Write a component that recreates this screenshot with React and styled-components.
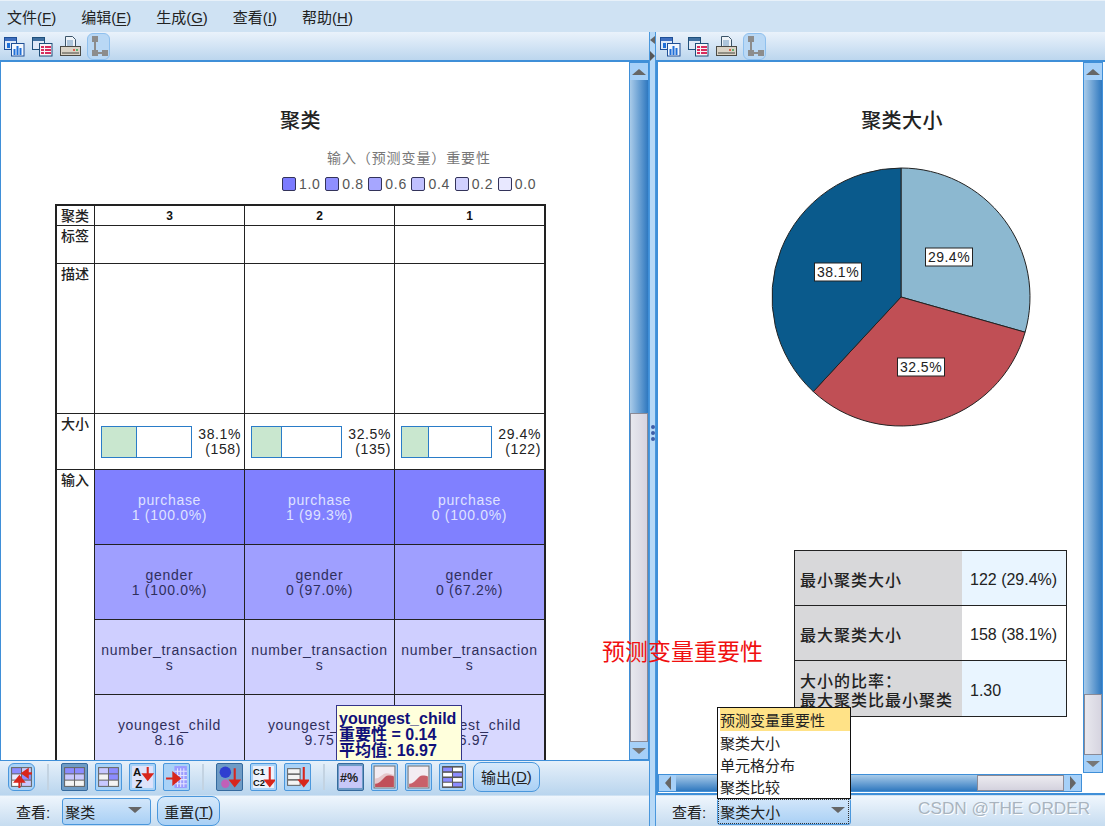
import React from "react";
import styled, { createGlobalStyle } from "styled-components";

const GlobalStyle = createGlobalStyle`
  html, body {
    margin: 0;
    padding: 0;
    background: #fff;
    font-family: "Liberation Sans", "Noto Sans CJK SC", sans-serif;
  }
`;

const clusters = [
  { id: 3, pct: 38.1, count: 158, cells: ["1 (100.0%)", "1 (100.0%)", "", "8.16"] },
  { id: 2, pct: 32.5, count: 135, cells: ["1 (99.3%)", "0 (97.0%)", "", "9.75"] },
  { id: 1, pct: 29.4, count: 122, cells: ["0 (100.0%)", "0 (67.2%)", "", "16.97"] },
];

const inputRows = [
  { name: "purchase", bg: "#8080ff", color: "#dfe2ff" },
  { name: "gender", bg: "#9f9fff", color: "#2f2f5c" },
  { name: "number_transaction\ns", bg: "#cfcfff", color: "#2f2f5c" },
  { name: "youngest_child", bg: "#d8d8ff", color: "#2f2f5c" },
];

const legend = [
  ["1.0", "#7b7bff"],
  ["0.8", "#8f8fff"],
  ["0.6", "#a6a6ff"],
  ["0.4", "#c0c0ff"],
  ["0.2", "#d0d0ff"],
  ["0.0", "#e8e8ff"],
];

const slices = [
  { pct: 29.4, color: "#8cb8d0", lx: 48, ly: -40 },
  { pct: 32.5, color: "#c04f55", lx: 20, ly: 70 },
  { pct: 38.1, color: "#0a5a8c", lx: -63, ly: -25 },
];

const Page = styled.div`
  position: relative;
  width: 1105px;
  height: 826px;
  overflow: hidden;
  display: flex;
  flex-direction: column;
  background: #cfe2f3;
`;

const MenuBar = styled.div`
  height: 32px;
  box-sizing: border-box;
  padding: 0 0 1px 7px;
  display: flex;
  align-items: center;
  gap: 25px;
  background: #cfe2f3;
  border-top: 1px solid #e8f1f9;
  font-size: 15px;
  color: #222;
`;

const MenuItem = styled.span`
  u {
    text-underline-offset: 2px;
  }
`;

const Panes = styled.div`
  flex: 1;
  display: flex;
  min-height: 0;
`;

const LeftPane = styled.div`
  width: 649px;
  display: flex;
  flex-direction: column;
`;

const RightPane = styled.div`
  position: relative;
  flex: 1;
  display: flex;
  flex-direction: column;
`;

const Splitter = styled.div`
  width: 7px;
  box-sizing: border-box;
  background: #b7d9f7;
  border-left: 1px solid #4a97dc;
  border-right: 1px solid #4a97dc;
  display: flex;
  flex-direction: column;
  align-items: center;
  padding-top: 4px;
`;

const NudgeLeft = styled.div`
  width: 0;
  height: 0;
  border-top: 4px solid transparent;
  border-bottom: 4px solid transparent;
  border-right: 5px solid #666;
`;

const NudgeRight = styled.div`
  width: 0;
  height: 0;
  margin-top: 7px;
  border-top: 5px solid transparent;
  border-bottom: 5px solid transparent;
  border-left: 5px solid #555;
`;

const GripDots = styled.div`
  margin-top: 364px;
  display: flex;
  flex-direction: column;
  gap: 2px;
`;

const GripDot = styled.div`
  width: 4px;
  height: 4px;
  border-radius: 50%;
  background: #3f5fa8;
`;

const TopBar = styled.div`
  height: 28px;
  box-sizing: border-box;
  display: flex;
  align-items: center;
  gap: 7px;
  padding-left: ${(p) => p.$left}px;
  background: linear-gradient(#eaf2fb, #bcd6ee);
`;

const TreeButton = styled.div`
  width: 23px;
  height: 27px;
  margin-left: -1px;
  display: flex;
  align-items: center;
  justify-content: center;
  box-sizing: border-box;
  border: 1px solid #8fc0ee;
  border-radius: 6px;
  background: #b9d8f5;
`;

const LeftBody = styled.div`
  flex: 1;
  min-height: 0;
  display: flex;
  box-sizing: border-box;
  background: #fff;
  border-top: 2px solid #3f8fd8;
  border-left: 1px solid #3f8fd8;
  border-bottom: 1px solid #3f8fd8;
`;

const RightBody = styled.div`
  flex: 1;
  min-height: 0;
  display: grid;
  grid-template-columns: 1fr 20px;
  grid-template-rows: 1fr 18px;
  box-sizing: border-box;
  background: #fff;
  padding: 0 2px 2px 0;
  border-top: 2px solid #3f8fd8;
  border-left: 2px solid #3f8fd8;
  border-bottom: 2px solid #3f8fd8;
`;

const Canvas = styled.div`
  position: relative;
  flex: 1;
  min-width: 0;
  overflow: hidden;
`;

const ChartArea = styled.div`
  min-height: 0;
  overflow: hidden;
`;

const ChartTitle = styled.div`
  margin: 49px 0 0 ${(p) => p.$left}px;
  width: ${(p) => p.$width}px;
  height: 20px;
  text-align: center;
  font-size: 20px;
  line-height: 20px;
  letter-spacing: 0.4px;
  color: #222;
  font-weight: 500;
`;

const SubTitle = styled.div`
  margin: 19px 0 0 326px;
  height: 16px;
  font-size: 14px;
  line-height: 16px;
  letter-spacing: 0.9px;
  color: #777;
`;

const Legend = styled.div`
  margin: 10px 0 0 281px;
  display: flex;
  gap: 4.6px;
`;

const LegendItem = styled.div`
  display: flex;
  align-items: center;
  gap: 3px;
  font-size: 14px;
  letter-spacing: 0.7px;
  color: #555;
`;

const Swatch = styled.span`
  width: 14px;
  height: 14px;
  box-sizing: border-box;
  border: 1px solid #33335a;
  border-radius: 2px;
  background: ${(p) => p.$bg};
`;

const ClusterTable = styled.div`
  margin: 12px 0 0 54px;
  width: 491px;
  box-sizing: border-box;
  display: grid;
  grid-template-columns: 38px 150px 150px 149px;
  grid-template-rows: 20px 38px 150px 56px repeat(4, 75px);
  border: 2px solid #222;
`;

const Cell = styled.div`
  box-sizing: border-box;
  border-right: ${(p) => (p.$end ? "0" : "1px solid #222")};
  border-bottom: 1px solid #222;
`;

const RowLabel = styled(Cell)`
  font-size: 14px;
  font-weight: 500;
  line-height: 16px;
  padding: 2px 0 0 4px;
  color: #222;
  grid-row: span ${(p) => p.$span || 1};
`;

const HeadCell = styled(Cell)`
  font-size: 12px;
  font-weight: 700;
  line-height: 20px;
  text-align: center;
  color: #111;
`;

const SizeCell = styled(Cell)`
  display: flex;
  align-items: center;
  justify-content: space-between;
  padding: 0 3px 0 6px;
`;

const SizeBar = styled.div`
  width: 91px;
  height: 32px;
  box-sizing: border-box;
  border: 1px solid #2a7cc8;
  background: #fff;
`;

const SizeFill = styled.div`
  height: 100%;
  background: #c9e7cf;
  border-right: 1px solid #2a7cc8;
`;

const SizeText = styled.div`
  font-size: 14px;
  line-height: 15px;
  letter-spacing: 0.6px;
  text-align: right;
  color: #222;
`;

const InputCell = styled(Cell)`
  display: flex;
  align-items: center;
  justify-content: center;
  text-align: center;
  white-space: pre-line;
  padding-top: 1px;
  font-size: 14px;
  line-height: 14.5px;
  letter-spacing: 0.7px;
  background: ${(p) => p.$bg};
  color: ${(p) => p.$color};
`;

const Tooltip = styled.div`
  position: absolute;
  left: 335px;
  top: 643px;
  width: 126px;
  height: 61px;
  box-sizing: border-box;
  padding: 5px 0 0 2px;
  background: #ffffdc;
  border: 1px solid #33338a;
  border-bottom: 0;
  color: #10107a;
  font-size: 16px;
  line-height: 16px;
  font-weight: 700;
  white-space: nowrap;
`;

const VScroll = styled.div`
  width: 20px;
  box-sizing: border-box;
  margin: 0 0 1px;
  display: flex;
  flex-direction: column;
  border: 1px solid #3f8fd8;
  height: ${(p) => p.$height}px;
`;

const HScroll = styled.div`
  display: flex;
  box-sizing: border-box;
  border: 1px solid #3f8fd8;
  height: 18px;
  margin-right: 1px;
`;

const ScrollButton = styled.div`
  flex: none;
  display: flex;
  align-items: center;
  justify-content: center;
  width: ${(p) => (p.$side ? "17px" : "auto")};
  height: ${(p) => (p.$side ? "auto" : "17px")};
  background: #a6d0f8;
`;

const Arrow = styled.div`
  width: 0;
  height: 0;
  ${(p) =>
    p.$dir === "up" &&
    "border-left: 7px solid transparent; border-right: 7px solid transparent; border-bottom: 6px solid #666;"}
  ${(p) =>
    p.$dir === "down" &&
    "border-left: 7px solid transparent; border-right: 7px solid transparent; border-top: 6px solid #777;"}
  ${(p) =>
    p.$dir === "left" &&
    "border-top: 7px solid transparent; border-bottom: 7px solid transparent; border-right: 6px solid #666;"}
  ${(p) =>
    p.$dir === "right" &&
    "border-top: 7px solid transparent; border-bottom: 7px solid transparent; border-left: 6px solid #666;"}
`;

const VTrack = styled.div`
  flex: none;
  height: ${(p) => p.$size}px;
  background: linear-gradient(90deg, #a9cbe9, #2f78bf);
`;

const HTrack = styled.div`
  flex: none;
  width: ${(p) => p.$size}px;
  background: linear-gradient(#a9cbe9, #2f78bf);
`;

const Thumb = styled.div`
  flex: 1;
  box-sizing: border-box;
  background: linear-gradient(90deg, #e8e8ee, #d6d4e0);
  border: 1px solid #8a8a96;
`;

const HThumb = styled(Thumb)`
  background: linear-gradient(#ecebf0, #d4d2de);
`;

const ScrollCorner = styled.div`
  background: #fff;
`;

const BottomTools = styled.div`
  height: 34px;
  box-sizing: border-box;
  display: flex;
  align-items: center;
  gap: 7px;
  padding: 0 0 3px 8px;
  background: linear-gradient(#e6f0fa, #b9d5ee);
`;

const ToolButton = styled.div`
  width: 27px;
  height: 28px;
  box-sizing: border-box;
  display: flex;
  align-items: center;
  justify-content: center;
  border: 1px solid ${(p) => (p.$pressed ? "#356a9e" : "#4a97dc")};
  border-radius: ${(p) => (p.$round ? "6px" : "2px")};
  background: ${(p) => (p.$pressed ? "#6f9cc6" : "#a9d2f7")};
`;

const ToolSep = styled.div`
  width: 2px;
  height: 26px;
  margin: 0 5px;
  background: #c3d3e2;
`;

const TextButton = styled.div`
  height: 30px;
  box-sizing: border-box;
  display: flex;
  align-items: center;
  padding: 0 ${(p) => p.$pad}px;
  border: 1px solid #4a97dc;
  border-radius: 8px;
  background: linear-gradient(#d6e9fb, #a9d0f5);
  font-size: 15px;
  color: #222;
`;

const ViewBar = styled.div`
  height: 31px;
  box-sizing: border-box;
  display: flex;
  align-items: center;
  gap: 6px;
  padding-left: 16px;
  background: linear-gradient(#eff6fd, #c6dcf0);
  border-top: 1px solid #cfe2f3;
  font-size: 15px;
  color: #222;
`;

const ViewLabel = styled.span`
  margin-right: ${(p) => p.$gap}px;
`;

const Select = styled.div`
  width: ${(p) => p.$width}px;
  height: 27px;
  box-sizing: border-box;
  display: flex;
  align-items: center;
  justify-content: space-between;
  padding: 0 ${(p) => p.$padRight}px 0 2px;
  border: 1px solid #4a97dc;
  border-radius: 3px;
  background: linear-gradient(#d2e6fa, #a9d0f5);
  font-size: 15px;
  color: #222;
`;

const FocusText = styled.span`
  outline: 1px dotted #333;
  outline-offset: 1px;
  flex: 1;
  display: flex;
  justify-content: space-between;
  align-items: center;
  padding-right: 2px;
`;

const SelectArrow = styled.span`
  width: 0;
  height: 0;
  margin-top: -2px;
  border-left: 7px solid transparent;
  border-right: 7px solid transparent;
  border-top: 6px solid #666;
`;

const StatsTable = styled.div`
  margin: 122px 0 0 136px;
  width: 273px;
  box-sizing: border-box;
  display: grid;
  grid-template-columns: 167px 1fr;
  grid-template-rows: 55px 55px 55px;
  border: 1px solid #222;
`;

const StatLabel = styled.div`
  display: flex;
  align-items: center;
  padding: 4px 0 0 5px;
  background: #d8d8da;
  border-bottom: ${(p) => (p.$last ? "0" : "1px solid #222")};
  font-size: 16px;
  line-height: 19px;
  letter-spacing: 1px;
  font-weight: 500;
  color: #222;
  white-space: pre-line;
`;

const StatValue = styled.div`
  display: flex;
  align-items: center;
  padding: 4px 0 0 8px;
  background: ${(p) => p.$bg};
  border-bottom: ${(p) => (p.$last ? "0" : "1px solid #222")};
  font-size: 16px;
  color: #222;
`;

const PieBox = styled.div`
  margin: 35px 0 0 112px;
  width: 262px;
  height: 262px;
`;

const ViewMenu = styled.div`
  position: absolute;
  left: 61px;
  top: 675px;
  width: 134px;
  height: 92px;
  box-sizing: border-box;
  padding: 0 0 0 2px;
  background: #fff;
  border: 1px solid #111;
  font-size: 15px;
  color: #222;
`;

const ViewMenuItem = styled.div`
  height: ${(p) => (p.$active ? 23 : 22)}px;
  line-height: 25px;
  background: ${(p) => (p.$active ? "#ffe287" : "transparent")};
`;

const Annotation = styled.div`
  position: absolute;
  left: 602px;
  top: 637px;
  font-size: 23px;
  line-height: 30px;
  color: #f01010;
  white-space: nowrap;
`;

const Watermark = styled.div`
  position: absolute;
  left: 918px;
  top: 797px;
  font-size: 17.2px;
  line-height: 22px;
  color: #a9b4bf;
  text-shadow: 1px 1px 0 #fff;
  white-space: nowrap;
`;

const ChartIcon = () => (
  <svg width="21" height="21" viewBox="0 0 21 21">
    <rect x="0.5" y="1.5" width="12" height="12" fill="#dfe9f7" stroke="#1f4f96" />
    <rect x="1" y="2" width="11" height="3" fill="#3f6fc0" />
    <rect x="3" y="7" width="3" height="5" fill="#1f6fd8" />
    <rect x="7.5" y="7.5" width="12.5" height="12.5" fill="#f3f7fd" stroke="#1f4f96" />
    <rect x="9.5" y="13" width="2" height="6" fill="#1f6fd8" />
    <rect x="12.5" y="10" width="2" height="9" fill="#1f6fd8" />
    <rect x="15.5" y="12" width="2" height="7" fill="#1f6fd8" />
  </svg>
);

const TableIcon = () => (
  <svg width="21" height="21" viewBox="0 0 21 21">
    <rect x="0.5" y="1.5" width="12" height="12" fill="#dfe9f7" stroke="#1f4f7a" />
    <rect x="1" y="2" width="11" height="3" fill="#3f6fa0" />
    <rect x="7.5" y="7.5" width="12.5" height="12.5" fill="#f8f4f6" stroke="#1f4f7a" />
    {[9, 13, 16].map((x) =>
      [10, 13, 16].map((y) => <rect key={x + "-" + y} x={x} y={y} width="3" height="2" fill="#d82c5c" />)
    )}
  </svg>
);

const PrinterIcon = () => (
  <svg width="21" height="21" viewBox="0 0 21 21">
    <path d="M5.5 0.5h7l3 3v8h-10z" fill="#eef3f8" stroke="#3c5468" />
    <path d="M7 5h6M7 7h6M7 9h6" stroke="#6d96bd" />
    <rect x="0.5" y="10.5" width="20" height="9" fill="#d9d3c6" stroke="#4a4a45" />
    <rect x="2" y="16" width="17" height="2" fill="#8f8c82" />
    <rect x="13" y="13" width="2" height="2" fill="#e06050" />
    <rect x="16" y="13" width="2" height="2" fill="#60b070" />
  </svg>
);

const TreeIcon = () => (
  <svg width="20" height="22" viewBox="0 0 20 22">
    <rect x="3" y="1" width="6" height="6" fill="#8c8c8c" />
    <rect x="3" y="15" width="6" height="6" fill="#8c8c8c" />
    <rect x="13" y="15" width="6" height="6" fill="#8c8c8c" />
    <path d="M6 7v8M9 18h4" stroke="#8c8c8c" strokeWidth="2" />
  </svg>
);

const RedDown = ({ x = 16, top = 3, bottom = 18 }) => (
  <path
    d={`M${x} ${top}v${bottom - top - 5}M${x - 4} ${bottom - 5}h8l-4 5z`}
    stroke="#d8261c"
    strokeWidth="2"
    fill="#d8261c"
  />
);

const Svg = ({ children }) => (
  <svg width="23" height="24" viewBox="0 0 22 23">
    {children}
  </svg>
);

const GridCells = ({ fills }) => (
  <>
    <rect x="1" y="2" width="20" height="19" fill="#666" />
    {fills.map((f, i) => (
      <rect key={i} x={2 + (i % 2) * 9.5} y={3 + Math.floor(i / 2) * 6} width="8.5" height="5" fill={f} />
    ))}
  </>
);

const SwapIcon = () => (
  <Svg>
    <GridCells fills={["#8c8cff", "#c8c8ff", "#e8e8ff", "#8c8cff", "#fff", "#c8c8ff"]} />
    <path d="M21 8h-7M17 4.5l-5 3.5 5 3.5z" stroke="#d8261c" strokeWidth="2" fill="#d8261c" />
    <path d="M9 22v-7M5 16l4-5 4 5z" stroke="#d8261c" strokeWidth="2" fill="#d8261c" />
  </Svg>
);

const AzIcon = () => (
  <Svg>
    <rect x="1" y="1" width="20" height="21" fill="#dfe3fb" />
    <text x="2" y="11" fontSize="11" fontWeight="700" fontFamily="Liberation Sans" fill="#111">A</text>
    <text x="4" y="22" fontSize="11" fontWeight="700" fontFamily="Liberation Sans" fill="#111">Z</text>
    <RedDown x={16} top={2} bottom={14} />
  </Svg>
);

const MoveIcon = () => (
  <Svg>
    <rect x="9" y="1" width="12" height="21" fill="#9c9cff" />
    <path d="M12 3v18M15 3v18M18 3v18M9 6h12M9 10h12M9 14h12M9 18h12" stroke="#e4e4ff" />
    <path d="M1 13h9M8 8l6 5-6 5z" stroke="#d8261c" strokeWidth="2" fill="#d8261c" />
  </Svg>
);

const DotsIcon = () => (
  <Svg>
    <circle cx="7" cy="7" r="5.5" fill="#2f3fd0" />
    <circle cx="7" cy="18" r="4" fill="#c060b8" />
    <RedDown x={16} top={3} bottom={20} />
  </Svg>
);

const LabelSortIcon = () => (
  <Svg>
    <rect x="1" y="1" width="20" height="21" fill="#eef2fb" />
    <text x="1" y="10" fontSize="9" fontWeight="700" fontFamily="Liberation Sans" fill="#111">C1</text>
    <text x="1" y="20" fontSize="9" fontWeight="700" fontFamily="Liberation Sans" fill="#111">C2</text>
    <RedDown x={17} top={2} bottom={20} />
  </Svg>
);

const RowsIcon = () => (
  <Svg>
    <rect x="1" y="3" width="13" height="17" fill="#666" />
    <rect x="2" y="4" width="11" height="4" fill="#f4f4f4" />
    <rect x="2" y="9.5" width="11" height="4" fill="#f4f4f4" />
    <rect x="2" y="15" width="11" height="4" fill="#f4f4f4" />
    <RedDown x={17} top={2} bottom={20} />
  </Svg>
);

const PercentIcon = () => (
  <Svg>
    <rect x="0" y="1" width="22" height="21" fill="#c8c8f8" />
    <text x="1" y="16" fontSize="12" fontWeight="700" fontFamily="Liberation Sans" fill="#222">#%</text>
  </Svg>
);

const AreaIcon = ({ fill, back }) => (
  <Svg>
    <rect x="1" y="1" width="20" height="21" fill="#f3ecf2" stroke="#777" />
    {back && <path d="M2 21V13C7 13 9 8 13 8s5 2 7 1v12z" fill="#e6c8cc" />}
    <path d="M2 21v-3c6 0 8-8 13-8 2 0 4 0 5 1v10z" fill={fill} />
  </Svg>
);

const BlocksIcon = () => (
  <Svg>
    <rect x="1" y="1" width="20" height="21" fill="#555" />
    {[2.5, 7.5, 12.5, 17].map((y, r) =>
      [2, 11.5].map((x, c) => (
        <rect key={r + "-" + c} x={x} y={y} width="8.5" height="3.5" fill={(r + c) % 2 ? "#fff" : "#8c8cff"} />
      ))
    )}
  </Svg>
);

const Pie = () => {
  const r = 129;
  const c = 131;
  let acc = 0;
  const point = (p) => {
    const a = (p / 100) * 2 * Math.PI;
    return [c + r * Math.sin(a), c - r * Math.cos(a)];
  };
  return (
    <svg width="262" height="262" viewBox="0 0 262 262">
      {slices.map((s) => {
        const [x1, y1] = point(acc);
        acc += s.pct;
        const [x2, y2] = point(acc);
        return (
          <path
            key={s.pct}
            d={`M${c} ${c}L${x1} ${y1}A${r} ${r} 0 0 1 ${x2} ${y2}Z`}
            fill={s.color}
            stroke="#222"
            strokeWidth="1"
          />
        );
      })}
      {slices.map((s) => (
        <g key={s.pct} transform={`translate(${c + s.lx} ${c + s.ly})`}>
          <rect x="-23.5" y="-9" width="47" height="18" fill="#fff" stroke="#222" />
          <text y="5" textAnchor="middle" fontSize="14" letterSpacing="0.5" fontFamily="Liberation Sans" fill="#222">
            {s.pct}%
          </text>
        </g>
      ))}
    </svg>
  );
};

const WindowTools = ({ left }) => (
  <TopBar $left={left}>
    <ChartIcon />
    <TableIcon />
    <PrinterIcon />
    <TreeButton>
      <TreeIcon />
    </TreeButton>
  </TopBar>
);

const App = () => {
  return (
    <Page>
      <GlobalStyle />
      <MenuBar>
        <MenuItem>文件(<u>F</u>)</MenuItem>
        <MenuItem>编辑(<u>E</u>)</MenuItem>
        <MenuItem>生成(<u>G</u>)</MenuItem>
        <MenuItem>查看(<u>I</u>)</MenuItem>
        <MenuItem>帮助(<u>H</u>)</MenuItem>
      </MenuBar>
      <Panes>
        <LeftPane>
          <WindowTools left={4} />
          <LeftBody>
            <Canvas>
              <ChartTitle $left={54} $width={491}>聚类</ChartTitle>
              <SubTitle>输入（预测变量）重要性</SubTitle>
              <Legend>
                {legend.map(([label, bg]) => (
                  <LegendItem key={label}>
                    <Swatch $bg={bg} />
                    {label}
                  </LegendItem>
                ))}
              </Legend>
              <ClusterTable>
                <RowLabel>聚类</RowLabel>
                {clusters.map((c) => (
                  <HeadCell key={c.id} $end={c.id === 1}>{c.id}</HeadCell>
                ))}
                <RowLabel>标签</RowLabel>
                {clusters.map((c) => (
                  <Cell key={c.id} $end={c.id === 1} />
                ))}
                <RowLabel>描述</RowLabel>
                {clusters.map((c) => (
                  <Cell key={c.id} $end={c.id === 1} />
                ))}
                <RowLabel>大小</RowLabel>
                {clusters.map((c) => (
                  <SizeCell key={c.id} $end={c.id === 1}>
                    <SizeBar>
                      <SizeFill style={{ width: `${c.pct}%` }} />
                    </SizeBar>
                    <SizeText>
                      {c.pct}%
                      <br />({c.count})
                    </SizeText>
                  </SizeCell>
                ))}
                <RowLabel $span={4}>输入</RowLabel>
                {inputRows.map((row, i) =>
                  clusters.map((c) => (
                    <InputCell key={row.name + c.id} $end={c.id === 1} $bg={row.bg} $color={row.color}>
                      {row.name}
                      {c.cells[i] ? "\n" + c.cells[i] : ""}
                    </InputCell>
                  ))
                )}
              </ClusterTable>
              <Tooltip>
                youngest_child
                <br />
                重要性 = 0.14
                <br />
                平均值: 16.97
              </Tooltip>
            </Canvas>
            <VScroll $height={698}>
              <ScrollButton>
                <Arrow $dir="up" />
              </ScrollButton>
              <VTrack $size={333} />
              <Thumb />
              <ScrollButton>
                <Arrow $dir="down" />
              </ScrollButton>
            </VScroll>
          </LeftBody>
          <BottomTools>
            <ToolButton $round><SwapIcon /></ToolButton>
            <ToolSep />
            <ToolButton $pressed>
              <Svg><GridCells fills={["#8c8cff", "#8c8cff", "#c8c8ff", "#c8c8ff", "#f4f4f4", "#f4f4f4"]} /></Svg>
            </ToolButton>
            <ToolButton>
              <Svg><GridCells fills={["#c8c8ff", "#8c8cff", "#f4f4f4", "#8c8cff", "#c8c8ff", "#f4f4f4"]} /></Svg>
            </ToolButton>
            <ToolButton><AzIcon /></ToolButton>
            <ToolButton><MoveIcon /></ToolButton>
            <ToolSep />
            <ToolButton $pressed><DotsIcon /></ToolButton>
            <ToolButton><LabelSortIcon /></ToolButton>
            <ToolButton><RowsIcon /></ToolButton>
            <ToolSep />
            <ToolButton $pressed><PercentIcon /></ToolButton>
            <ToolButton><AreaIcon fill="#c0505a" back /></ToolButton>
            <ToolButton><AreaIcon fill="#c8606a" /></ToolButton>
            <ToolButton><BlocksIcon /></ToolButton>
            <TextButton $pad={7}>输出(<u>D</u>)</TextButton>
          </BottomTools>
          <ViewBar>
            <ViewLabel $gap={6}>查看:</ViewLabel>
            <Select $width={89} $padRight={8}>
              聚类
              <SelectArrow />
            </Select>
            <TextButton $pad={6}>重置(<u>T</u>)</TextButton>
          </ViewBar>
        </LeftPane>
        <Splitter>
          <NudgeLeft />
          <NudgeRight />
          <GripDots>
            <GripDot />
            <GripDot />
            <GripDot />
          </GripDots>
        </Splitter>
        <RightPane>
          <WindowTools left={4} />
          <RightBody>
            <ChartArea>
              <ChartTitle $left={0} $width={488}>聚类大小</ChartTitle>
              <PieBox>
                <Pie />
              </PieBox>
              <StatsTable>
                <StatLabel>最小聚类大小</StatLabel>
                <StatValue $bg="#e9f5ff">122 (29.4%)</StatValue>
                <StatLabel>最大聚类大小</StatLabel>
                <StatValue $bg="#fff">158 (38.1%)</StatValue>
                <StatLabel $last>{"大小的比率：\n最大聚类比最小聚类"}</StatLabel>
                <StatValue $last $bg="#e9f5ff">1.30</StatValue>
              </StatsTable>
            </ChartArea>
            <VScroll $height={711}>
              <ScrollButton>
                <Arrow $dir="up" />
              </ScrollButton>
              <VTrack $size={614} />
              <Thumb />
              <ScrollButton>
                <Arrow $dir="down" />
              </ScrollButton>
            </VScroll>
            <HScroll>
              <ScrollButton $side>
                <Arrow $dir="left" />
              </ScrollButton>
              <HTrack $size={301} />
              <HThumb />
              <ScrollButton $side>
                <Arrow $dir="right" />
              </ScrollButton>
            </HScroll>
            <ScrollCorner />
          </RightBody>
          <ViewBar>
            <ViewLabel $gap={5}>查看:</ViewLabel>
            <Select $width={134} $padRight={3}>
              <FocusText>
                聚类大小
                <SelectArrow />
              </FocusText>
            </Select>
          </ViewBar>
          <ViewMenu>
            <ViewMenuItem $active>预测变量重要性</ViewMenuItem>
            <ViewMenuItem>聚类大小</ViewMenuItem>
            <ViewMenuItem>单元格分布</ViewMenuItem>
            <ViewMenuItem>聚类比较</ViewMenuItem>
          </ViewMenu>
        </RightPane>
      </Panes>
      <Annotation>预测变量重要性</Annotation>
      <Watermark>CSDN @THE ORDER</Watermark>
    </Page>
  );
};

export default App;
